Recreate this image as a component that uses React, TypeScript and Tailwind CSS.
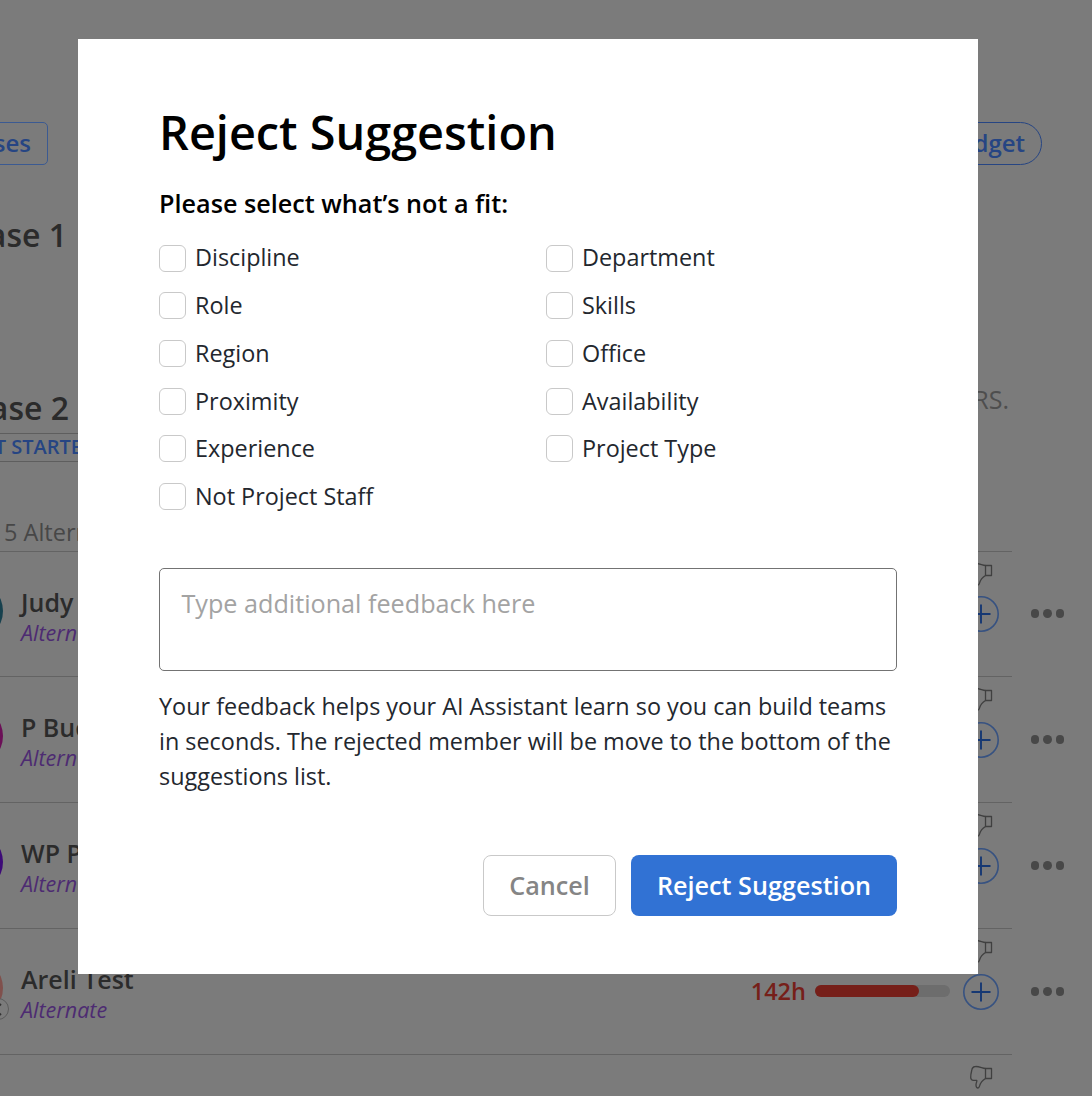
import { useState } from 'react';
import clsx from 'clsx';

interface Member {
  name: string;
  avatar: string;
  hours?: string;
  load?: number;
  badge?: boolean;
}

const reasons = [
  'Discipline', 'Department',
  'Role', 'Skills',
  'Region', 'Office',
  'Proximity', 'Availability',
  'Experience', 'Project Type',
  'Not Project Staff',
];

const members: Member[] = [
  { name: 'Judy', avatar: 'bg-[#17414e]' },
  { name: 'P Buc', avatar: 'bg-[#6b0f57]' },
  { name: 'WP P', avatar: 'bg-[#3d0a78]' },
  { name: 'Areli Test', avatar: 'bg-[#80504c]', hours: '142h', load: 77, badge: true },
];

function ThumbDown() {
  return (
    <svg width="24" height="24" viewBox="0 0 24 24" fill="none" stroke="#404040" strokeWidth="1.3" strokeLinejoin="round">
      <path d="M16.5 3.5h6v10h-6z" />
      <path d="M16.5 3.5C13 3 10 1.300 6.500 1.500C3.500 1.600 3 3.500 2.700 5.500C2.200 7.500 1.600 10 1.700 12.500C1.800 14.600 3 15.300 4.500 15.300L7.800 15.300C8.200 16.800 6.800 18 7 20.200C7.100 22 8 23 9 23C10.200 23 10.300 21.700 10.700 20.500C11.500 17.800 14 15 16.500 13.500" />
    </svg>
  );
}

function PlusCircle() {
  return (
    <svg width="36" height="36" viewBox="0 0 36 36" fill="none">
      <circle cx="18" cy="18" r="17.2" stroke="#375281" strokeWidth="1.6" />
      <path d="M18 8.500v19M8.500 18h19" stroke="#163873" strokeWidth="1.9" />
    </svg>
  );
}

function MemberRow({ member, first }: { member: Member; first: boolean }) {
  return (
    <div className={clsx('flex shrink-0', first ? 'h-[125px]' : 'h-[126px]')}>
      <div className="flex w-[1012px] border-t border-[#636363]">
        <div className="relative flex w-[21px] justify-start pt-[29px]">
          <div className={clsx('-ml-[57px] size-[60px] shrink-0 rounded-full', member.avatar)} />
          {member.badge && (
            <div className="absolute top-[69px] -left-[13px] flex size-[22px] items-center justify-end rounded-full border border-[#5c5c5c] bg-[#7b7b7b] pr-[6px]">
              <svg width="13" height="13" viewBox="0 0 13 13" stroke="#333333" strokeWidth="1.8">
                <path d="M1 1l11 11M12 1L1 12" />
              </svg>
            </div>
          )}
        </div>
        <div className="flex-1 pt-[32px]">
          <div className="text-[25px] leading-[36px] font-semibold text-[#2b2b2b]">{member.name}</div>
          <div className="text-[21.5px] leading-[26px] text-[#4d2b72] italic">Alternate</div>
        </div>
        {member.hours && (
          <div className="mt-[50px] mr-[13px] flex h-[24px] items-center gap-[9px] self-start">
            <span className="text-[23.5px] leading-[24px] font-semibold text-[#761f19]">{member.hours}</span>
            <div className="h-3 w-[135px] rounded-full bg-[#6d6d6d]">
              <div className="h-3 rounded-full bg-[#761f19]" style={{ width: `${member.load}%` }} />
            </div>
          </div>
        )}
        <div className="flex w-[49px] flex-col pt-[10px]">
          <div className="ml-[6px]"><ThumbDown /></div>
          <div className={first ? 'mt-[10px]' : 'mt-[11px]'}><PlusCircle /></div>
        </div>
      </div>
      <div className={clsx('flex gap-[4px] pl-[19px]', first ? 'pt-[58.3px]' : 'pt-[59.3px]')}>
        {[0, 1, 2].map((i) => (
          <span key={i} className="size-[8.300px] rounded-full bg-[#484848]" />
        ))}
      </div>
    </div>
  );
}

function ProjectPage() {
  return (
    <div className="flex h-[1096px] flex-col overflow-hidden pt-[122px]">
      <div className="flex h-[43px] shrink-0 justify-between pr-[50px]">
        <div className="flex w-[48px] justify-end">
          <button className="shrink-0 rounded-[5px] border border-[#3b5a92] pr-4 pl-6 text-[24px] leading-[39px] font-semibold text-[#264583]">
            <span className="relative -top-px">ses</span>
          </button>
        </div>
        <button className="rounded-full border border-[#264583] pr-4 pl-6 text-[24px] leading-[39px] font-semibold text-[#264583]">
          <span className="relative -top-px">dget</span>
        </button>
      </div>

      <div className="mt-[50px] flex h-10 w-[67px] shrink-0 items-center justify-end text-[32px] font-semibold whitespace-nowrap text-[#2b2b2b]">
        ase 1
      </div>

      <div className="mt-[133px] flex h-10 shrink-0 justify-between pr-[83px]">
        <div className="flex w-[69px] items-center justify-end text-[32px] font-semibold whitespace-nowrap text-[#2b2b2b]">
          ase 2
        </div>
        <div className="text-[25px] leading-[23px] text-[#4e4e4e]">RS.</div>
      </div>
      <div className="mt-[5px] flex h-[29px] w-[200px] shrink-0 border-y border-[#5e5e5e] text-[20px] leading-[25px] font-semibold whitespace-nowrap text-[#264583]">
        <div className="flex w-[82px] justify-end">T STARTE</div>
      </div>
      <div className="mt-[54px] h-[35px] shrink-0 pl-[4px] text-[23.5px] leading-[32px] text-[#474747]">5 Altern</div>

      <div className="flex flex-col">
        {members.map((m, i) => (
          <MemberRow key={m.name} member={m} first={i === 0} />
        ))}
        <div className="flex h-[126px] w-[1012px] shrink-0 justify-end border-t border-[#636363] pt-[10px] pr-[19px]">
          <ThumbDown />
        </div>
      </div>
    </div>
  );
}

function RejectDialog() {
  const [selected, setSelected] = useState<string[]>([]);
  const [feedback, setFeedback] = useState('');

  const toggle = (reason: string) =>
    setSelected((prev) => (prev.includes(reason) ? prev.filter((r) => r !== reason) : [...prev, reason]));

  return (
    <div className="flex h-[935px] w-[900px] flex-col bg-white px-[81px] pt-[61px]" role="dialog">
      <h1 className="text-[46.8px] leading-[64px] font-semibold text-black">Reject Suggestion</h1>
      <h2 className="mt-[23px] text-[25.2px] leading-[32px] font-semibold text-black">Please select what’s not a fit:</h2>

      <div className="mt-[15.3px] grid auto-rows-[47.7px] grid-cols-[387px_1fr]">
        {reasons.map((reason) => (
          <label key={reason} className="flex items-center gap-[9px] text-[23.4px] text-[#23272e]">
            <input
              type="checkbox"
              checked={selected.includes(reason)}
              onChange={() => toggle(reason)}
              className="size-[27px] appearance-none rounded-[6px] border border-[#c9c9c9] bg-white checked:bg-[#3172d4]"
            />
            <span className="-mt-[1.4px] leading-[32px]">{reason}</span>
          </label>
        ))}
      </div>

      <textarea
        value={feedback}
        onChange={(e) => setFeedback(e.target.value)}
        placeholder="Type additional feedback here"
        className="mt-[47.5px] h-[103px] shrink-0 resize-none rounded-[5px] border border-[#737373] px-[21.4px] py-[17px] text-[25.2px] leading-[34px] placeholder:text-[#a3a3a3]"
      />

      <p className="mt-[18px] text-[23.4px] leading-[35px] whitespace-nowrap text-[#23272e]">
        Your feedback helps your AI Assistant learn so you can build teams
        <br />
        in seconds. The rejected member will be move to the bottom of the
        <br />
        suggestions list.
      </p>

      <div className="mt-[61px] flex h-[61px] shrink-0 justify-end gap-[15px] text-[25.2px] font-semibold">
        <button className="w-[133px] rounded-[8px] border border-[#c9c9c9] text-[#858585]">Cancel</button>
        <button className="w-[266px] rounded-[8px] bg-[#3172d4] text-white">Reject Suggestion</button>
      </div>
    </div>
  );
}

export default function App() {
  return (
    <div className="relative h-[1096px] w-[1092px] overflow-hidden bg-[#7b7b7b] font-['Open_Sans',sans-serif]">
      <ProjectPage />
      <div className="absolute inset-0 pt-[39px] pl-[78px]">
        <RejectDialog />
      </div>
    </div>
  );
}
